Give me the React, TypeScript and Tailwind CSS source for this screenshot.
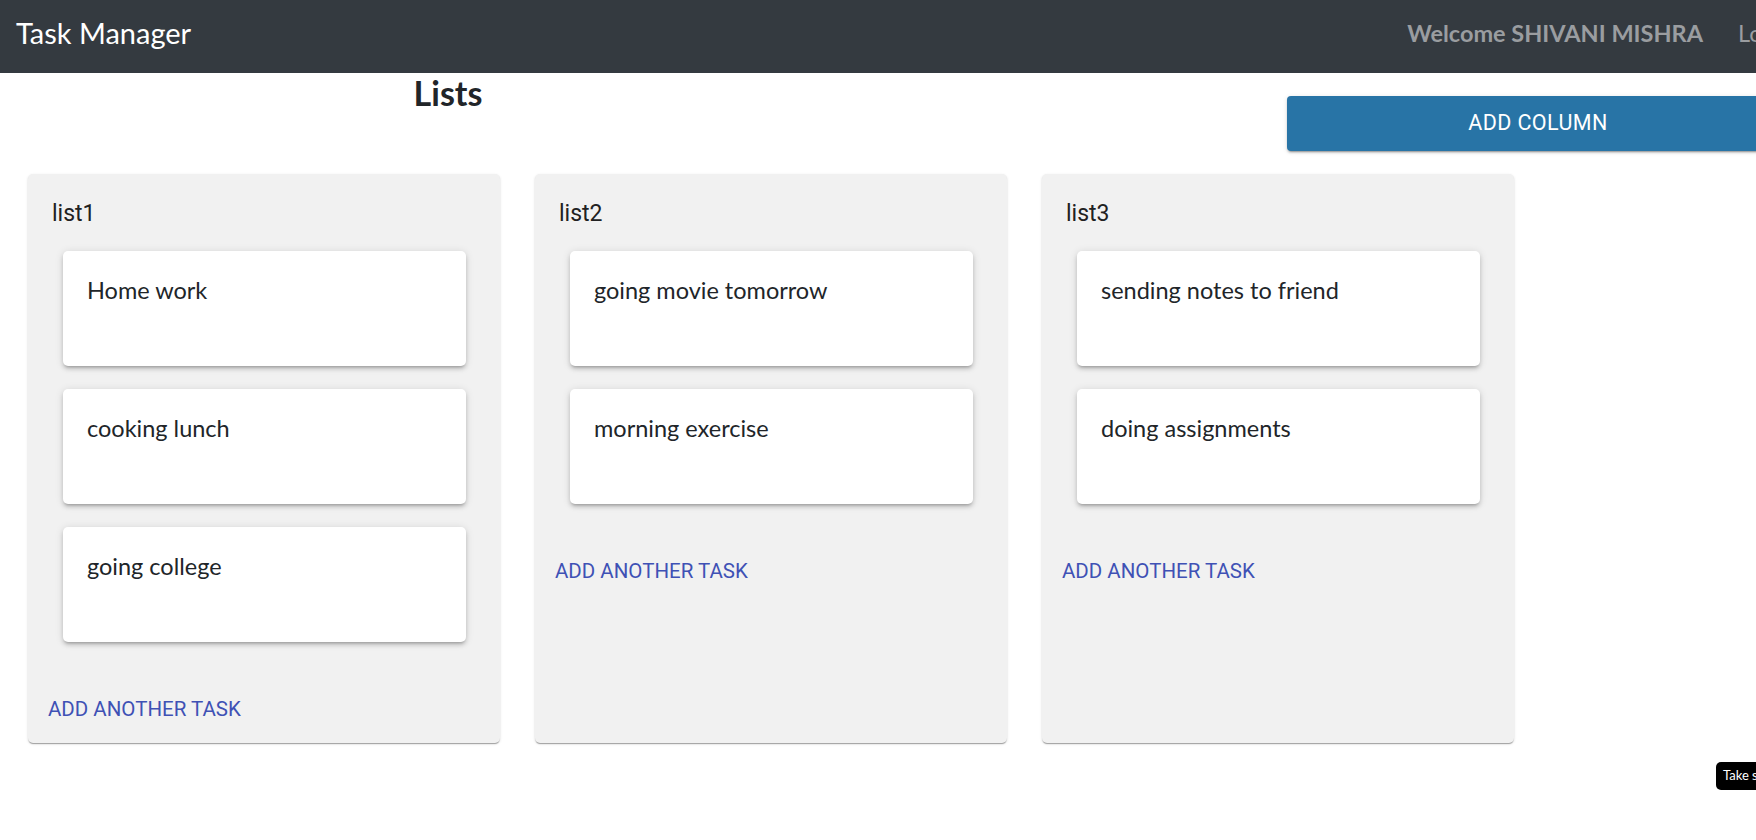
import React from 'react';

const lists = [
  { id: 'list1', title: 'list1', tasks: ['Home work', 'cooking lunch', 'going college'] },
  { id: 'list2', title: 'list2', tasks: ['going movie tomorrow', 'morning exercise'] },
  { id: 'list3', title: 'list3', tasks: ['sending notes to friend', 'doing assignments'] },
];

const Navbar: React.FC = () => (
  <nav className="h-[73px] shrink-0 bg-[#343a40] flex items-center pl-4 pb-[7px] font-['Lato',sans-serif]">
    <span className="text-white text-[29px] leading-[1.2]">Task Manager</span>
    <div className="ml-auto flex items-center text-[#9a9da0] text-[23.5px] leading-[1.2]">
      <span className="font-bold whitespace-nowrap">Welcome SHIVANI MISHRA</span>
      <div className="w-[53px] pl-[35px] whitespace-nowrap">Logout</div>
    </div>
  </nav>
);

const TaskCard: React.FC<{ text: string }> = ({ text }) => (
  <div className="h-[115px] bg-white rounded-[5px] px-6 pt-[22px] shadow-[0_3px_3px_-2px_rgba(0,0,0,0.2),0_3px_4px_0_rgba(0,0,0,0.14),0_1px_8px_0_rgba(0,0,0,0.12)]">
    <p className="text-[23.5px] leading-[1.5] text-[#212529] font-['Lato',sans-serif]">{text}</p>
  </div>
);

const Column: React.FC<{ title: string; tasks: string[] }> = ({ title, tasks }) => (
  <div className="w-[472px] h-[569px] shrink-0 bg-[#f1f1f1] rounded-[5px] flex flex-col shadow-[0_2px_1px_-1px_rgba(0,0,0,0.2),0_1px_1px_0_rgba(0,0,0,0.14),0_1px_3px_0_rgba(0,0,0,0.12)]">
    <div className="pt-[26px] px-6 text-[23px] leading-[28px] text-[#212121] font-['Roboto',sans-serif]">{title}</div>
    <div className="mt-[23px] ml-[35px] w-[403px] flex flex-col gap-[23px]">
      {tasks.map(t => (
        <TaskCard key={t} text={t} />
      ))}
    </div>
    <button className="self-start mt-[55px] ml-[20px] text-[20.5px] leading-[24px] uppercase text-[#3f51b5] font-['Roboto',sans-serif]">
      Add another task
    </button>
  </div>
);

export default function App() {
  return (
    <div className="w-full h-screen overflow-hidden relative bg-white flex flex-col">
      <Navbar />
      <div className="flex shrink-0">
        <div className="w-[1287px] shrink-0">
          <h2 className="w-[896px] text-center text-[34px] leading-[1.2] font-bold text-[#212529] font-['Lato',sans-serif]">
            Lists
          </h2>
        </div>
        <button className="mt-[23px] w-[502px] h-[55px] shrink-0 rounded-[4px] bg-[#2874a6] text-white text-[21.5px] tracking-[0.4px] uppercase font-['Roboto',sans-serif] shadow-[0_3px_1px_-2px_rgba(0,0,0,0.2),0_2px_2px_0_rgba(0,0,0,0.14),0_1px_5px_0_rgba(0,0,0,0.12)]">
          Add column
        </button>
      </div>
      <div className="flex gap-[35px] pl-[28px] mt-[23px]">
        {lists.map(l => (
          <Column key={l.id} title={l.title} tasks={l.tasks} />
        ))}
      </div>
      <div className="absolute left-[1716px] top-[762px] h-[28px] flex items-center px-[7px] bg-black rounded-[5px] text-white text-[13px] whitespace-nowrap font-['Lato',sans-serif]">
        Take screenshot
      </div>
    </div>
  );
}
